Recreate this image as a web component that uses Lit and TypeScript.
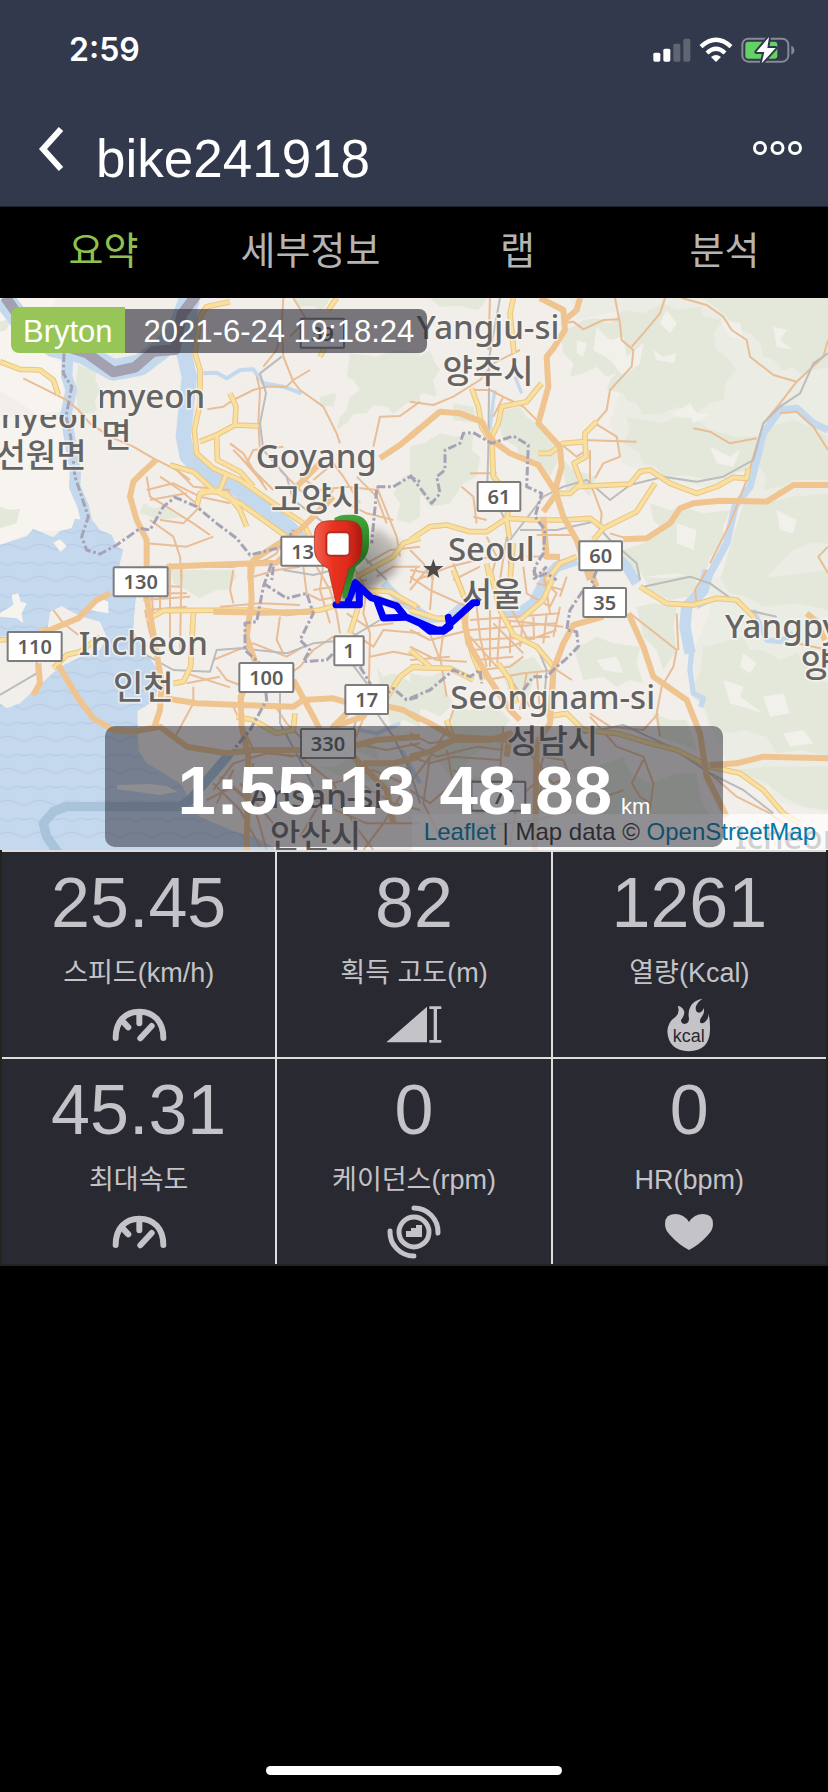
import { LitElement, html, svg, css } from "lit";
import { customElement, property, state } from "lit/decorators.js";

/* The map sheet is 2484 x 1656 units and is drawn as four quadrants. */
const ORIGIN: Record<string, string> = {
  nw: "translate(0 -24)",
  ne: "translate(1230 -24)",
  sw: "translate(0 816)",
  se: "translate(1230 816)",
};

type Lines = Record<string, string[]>;

const HILLS: Lines = {
  ne: ["M480 24H1254V870H940L1000 640L1040 520L900 590L760 570L640 520L600 400L640 280L680 160L640 60L500 90Z"],
  se: ["M900 20L1254 0V730L1120 700L960 590L900 470L860 380L850 250L900 120Z"],
};

const WOODS: Lines = {
  nw: [
    "M0 95L35 85L20 120L0 125Z",
    "M235 225L262 235L268 225L290 240L286 270L300 300L285 330L290 360L280 370H235L225 300Z",
    "M880 24H990L975 50L960 60L940 48L900 50Z",
    "M1050 190L1130 200L1180 180L1260 185V330L1220 340L1180 372L1160 350L1120 345L1100 370L1060 372L1040 400L1010 420L1020 380L1040 360L1050 320L1080 300L1060 270L1040 260Z",
    "M1210 560L1260 540V680L1230 700L1190 690L1200 640L1180 610Z",
    "M0 650L30 660L60 656L50 700L0 715Z",
    "M430 640L460 655L500 650L520 670L545 680L480 690L420 670Z",
    "M960 320L1010 310L1000 350L960 345Z",
  ],
  ne: [
    "M60 24H230L215 50L200 60L150 48L90 50Z",
    "M0 190L30 200L60 180L70 210L90 240L70 270L80 320L40 310L0 330Z",
    "M450 120L490 110L520 90L560 85L600 100L640 60L700 70L760 40L800 60L870 50L880 80L940 90L910 130L920 180L950 200L980 240L950 270L940 330L900 340L860 370L800 350L760 370L700 375L680 340L650 330L640 310L590 300L600 270L620 250L590 260L560 230L520 250L480 260L490 220L460 190Z",
    "M880 24H1254V230L1210 240L1180 260L1150 230L1120 240L1090 210L1060 200L1050 160L1020 130L990 120L940 70Z",
    "M650 380L700 390L760 400L800 380L860 390L900 420L980 440L1060 440L1050 480L1020 540L960 550L900 570L830 555L760 560L740 530L700 520L690 490L640 460L660 420Z",
    "M1080 410L1150 390L1200 410L1254 440V570L1150 570L1110 590L1060 600L1070 560L1040 520Z",
    "M0 470L40 460L90 430L140 440L190 430L185 480L210 500L200 560L160 580L120 640L60 650L40 620L0 600Z",
    "M260 380L280 360L330 350L350 380L380 400L400 430L440 450L450 500L420 560L390 520L330 500L320 470L280 450Z",
    "M450 500L490 540L560 560L540 620L510 590L470 600Z",
    "M720 640L780 660L820 650L880 670L960 660L940 710L940 760L900 800L880 870L800 850L700 860L680 820L640 780L700 760L760 720L730 690Z",
    "M1000 640L1060 640L1150 620L1254 610V760L1200 760L1150 780L1110 820L1060 870H930L960 770Z",
    "M590 760L640 780L700 770L690 850L640 830L600 800Z",
    "M130 340L190 350L200 400L130 390Z",
  ],
  sw: [
    "M510 0H700L710 20L680 60L650 60L600 85L560 60L520 40Z",
    "M1130 290L1150 320L1180 310L1220 330L1260 350V470L1210 450L1180 480L1160 430L1150 400Z",
    "M960 590L1000 590L1060 560L1100 590L1180 580L1150 620L1170 650L1110 630L1060 640Z",
    "M1060 540L1110 500L1140 570Z",
  ],
  se: [
    "M490 230L530 220L560 200L610 220L690 230L680 280L700 340L660 330L620 350L580 320L520 330Z",
    "M0 310L60 320L110 300L100 350L130 400L90 440L50 420L0 410Z",
    "M270 290L370 260L400 300L370 330L350 400L320 370L300 380Z",
    "M130 410L180 420L250 400L300 450L270 490L290 540L230 530L180 560L160 600L120 620L90 580L40 560L80 540L120 500Z",
    "M730 100L800 110L790 170L800 240L780 270L760 300L740 240L700 200L680 110Z",
    "M880 230L930 220L1000 200L1020 240L1060 240L1110 270L1160 250L1200 300L1254 340V560L1180 540L1100 550L1070 500L1000 480L960 490L900 470L890 420L840 370L870 310Z",
    "M480 600L560 590L640 560L660 610L720 640L800 610L860 610L870 680L900 740L830 750L760 790L720 740L640 730L580 760L520 760L540 690Z",
    "M900 580L980 600L1060 590H1254V720L1180 710L1120 680L1070 640L1000 610Z",
    "M700 20L760 25L840 15L890 70L780 90L720 60Z",
    "M930 24L1100 20L1254 0V120L1160 100L1060 110L1010 80L960 70Z",
    "M190 620L230 620L280 600L340 640L310 680L300 730L240 720L200 740Z",
    "M730 430L780 450L830 450L860 540L800 520L750 500Z",
  ],
};

const CLEARINGS: Lines = {
  ne: [
    "M560 110L600 150L640 140L650 200L700 160L690 220L640 260L600 210L550 180Z",
    "M760 350L790 370L840 340L860 370L900 375L850 400L840 380L800 380Z",
    "M930 90L990 100L1000 150L960 140Z",
    "M1090 110L1130 120L1110 150L1150 180L1100 170Z",
    "M900 470L960 500L990 480L970 530L920 520Z",
    "M770 60L800 100L780 130L750 100Z",
    "M1100 660L1160 690L1150 730L1110 720Z",
    "M800 700L860 720L850 780L800 760Z",
    "M730 180L760 200L800 190L790 220L740 210Z",
    "M500 150L530 160L520 200L500 190Z",
  ],
  se: [
    "M940 330L1000 350L990 380L1060 430L960 400Z",
    "M1060 380L1120 370L1140 430L1080 440Z",
    "M560 270L620 260L640 310L580 300Z",
    "M1120 490L1180 480L1210 520L1140 530Z",
    "M990 640L1080 650L1090 690L1030 680Z",
    "M1000 250L1040 280L1020 310L990 290Z",
  ],
};

const RIVERS: [string, number, string][] = [
  ["nw", 34, "M203 190L200 260L214 300L198 372L208 440L226 545L224 590L250 650L265 720"],
  ["nw", 64, "M10 24L60 90L160 170L250 190L340 240L420 225L480 180L530 130L570 24"],
  ["nw", 46, "M560 24L575 110L552 190L568 260L560 340L550 440L562 500L620 555L700 590L790 650L870 715L920 770"],
  ["nw", 12, "M610 250L650 248L680 265L720 240L760 238L790 280L850 290L905 310"],
  ["sw", 26, "M1150 40L1200 90L1280 140"],
  ["se", 20, "M0 132L60 150L110 145L150 110L210 90"],
  ["se", 32, "M280 125L330 128L370 100L400 40L440 -10L500 -30"],
  ["ne", 10, "M315 260L335 310M255 300L250 330L240 420"],
  ["ne", 30, "M600 780L650 830L680 880"],
  ["ne", 22, "M1254 420L1210 400L1160 355L1110 360L1060 430L1040 510L1020 590L975 650L950 760L890 870"],
  ["se", 34, "M895 0L880 60L830 110L825 170L840 250"],
  ["se", 16, "M845 240L840 300L850 370L880 385L872 412M860 110L900 90"],
  ["se", 16, "M1030 120L1070 210L1110 215L1150 190"],
  ["sw", 12, "M1080 480L1130 490L1200 460M1205 540L1260 640"],
];

const MINOR: Lines = {
  nw: [
    "M70 265L120 290L160 310L200 330L235 360L270 400L330 440L400 470L460 505L530 540L570 570",
    "M622 358L670 350L700 330L760 300L800 290L860 290L880 270L930 240",
    "M850 24L845 110L850 200L880 275L900 300L970 350L1010 430L1020 460",
    "M790 230L830 180L845 110M770 260L780 300L775 400L780 480",
    "M880 24L920 90L870 140M690 460L730 490L760 540L800 600",
    "M700 480L820 600M720 500L790 580M740 520L760 480L850 470",
    "M440 560L450 620L500 650L580 700L630 735M440 600L520 580L600 620L690 640",
    "M480 560L540 600L600 650M520 530L580 590L690 600M450 630L560 610",
    "M440 760L560 770L640 740M450 690L520 740L540 800L545 870",
    "M480 690L550 700L600 650M1120 470L1140 380L1200 378L1260 335",
    "M1130 590L1150 640L1190 740L1200 800M1070 560L1130 620L1160 700",
    "M900 560L960 600L1040 590L1130 600M940 570L1000 520L1030 560L1080 640",
    "M840 540L900 600L960 650L1000 600M1040 640L1100 670L1180 690",
    "M780 820L830 790L850 740M760 860L830 840L900 830",
    "M1100 820L1170 780L1260 770M1130 860L1180 830L1260 830",
  ],
  ne: [
    "M0 335L70 345L130 320L210 270L250 220L330 180M240 24L235 180",
    "M615 24L630 100L635 150L670 180L665 230L600 300L590 360L555 400",
    "M455 100L490 95L520 118L580 90L630 88M765 24L750 70L700 130L665 170",
    "M815 24L890 45L940 80L965 120L1010 150L1020 200L1090 255L1160 275L1110 340L1060 400L1030 500L1010 570L960 700L900 820",
    "M1254 150L1240 200L1160 275M1110 370L1160 365L1210 410L1254 480",
    "M520 450L680 455M555 400L620 440L630 500L580 520L555 565M540 480L540 590",
    "M850 415L900 425L960 460L1040 445",
    "M450 460L500 500L530 480M545 590L575 670L570 720M600 730L650 745",
    "M155 590L190 620L200 700M180 550L260 550M190 680L230 690",
    "M0 780L40 820L70 870M20 870L120 830L240 800M0 840L60 850",
    "M130 870L210 830M230 740L260 800L240 870M290 740L270 870",
    "M405 720L410 800L450 810M380 735L500 735M350 800L450 798",
    "M180 300L240 300L300 330L340 350L390 400M250 380L280 320",
    "M1254 770L1225 800L1254 850",
  ],
  sw: [
    "M160 120L190 160L235 195M450 20L460 130M510 -20L510 240M545 -20L540 240",
    "M430 90L570 80M430 45L540 50M440 120L560 110M480 0L480 130M440 70L560 70",
    "M435 120L450 190L480 290M560 310L690 352M580 350L580 400L520 510M560 340L660 320",
    "M650 290L680 330L720 345M640 270L760 220L860 260L910 230",
    "M660 110L780 100L900 105M700 100L690 60L700 0M840 140L830 210L850 250",
    "M950 -10L990 60L1010 130L1020 190M940 60L1000 50L1100 30M970 -20L960 60L990 160",
    "M910 -10L920 70L960 90L1010 80M1060 -10L1100 60L1160 90L1260 110",
    "M1100 60L1090 130L1110 190L1105 420M1110 260L1180 245L1260 260M1040 130L1100 170L1180 160",
    "M1060 190L1120 230L1150 180L1260 190M840 330L900 290L940 240L1000 200",
    "M740 330L720 430L740 560M700 410L760 540L880 560M820 400L860 460L920 520L960 560",
    "M640 660L700 580L800 550L920 560M620 690L700 650L760 700L800 840M640 640L720 720L780 830",
    "M660 620L740 690M700 600L650 700M720 640L820 760M760 580L740 740M900 560L1000 640L1060 760L1120 840",
    "M1100 420L1060 520L1080 640L1180 700L1260 720M1060 520L1160 540L1260 520",
    "M860 620L960 700L1100 760L1260 760M1090 840L1150 760L1200 680L1230 560",
    "M960 700L900 800M1000 640L1120 600L1210 640",
  ],
  se: [
    "M0 20L60 60L170 110M0 60L50 0M70 0L60 120M130 -20L160 60L170 110M20 -10L0 40",
    "M200 110L210 200L230 290M240 120L240 290M270 140L262 280M300 150L300 250M340 140L330 230M370 140L372 210M410 130L400 220M450 110L430 200",
    "M180 150L450 130M180 180L440 160M180 210L420 200M190 240L300 230L440 180M200 270L310 260M210 300L300 290L340 260",
    "M280 150L460 170M250 160L340 250M180 200L260 290M300 110L360 220",
    "M0 230L80 270L170 275M0 180L60 210L180 180M0 270L120 260M100 190L90 260L110 380M60 190L90 270",
    "M340 -10L350 70L420 110L440 70L400 30M450 80L470 20M380 40L460 60M400 0L420 130",
    "M230 330L340 310L440 300L485 330M350 310L330 420M380 310L390 420M310 340L360 410",
    "M660 130L800 240L790 290L755 350L740 430L750 500M890 0L855 60L860 100M800 130L805 240",
    "M540 430L600 470L700 480L745 430M540 440L620 530L700 560L730 640L720 720",
    "M700 570L665 640L690 680L720 700M560 690L640 660M0 490L60 520L130 510M0 520L80 560L200 530L280 540",
    "M0 560L60 580L130 560L270 570M0 640L60 560L110 480L130 420M0 660L60 700L130 640L110 540",
    "M60 560L40 700L90 800M130 600L220 650L330 680L430 590M280 470L270 600L320 700L300 830",
    "M400 560L460 570L480 620L430 640L390 600L400 560M350 540L400 600L380 740M200 770L380 750L480 720",
    "M1160 220L1210 230L1254 240M900 610L980 680L1080 730L1120 760",
  ],
};

const RAIL: Lines = {
  nw: ["M845 200L780 250L798 310L780 400L790 480L860 560L880 630L960 690L1080 790L1160 870", "M440 830L700 830L800 810"],
  ne: [
    "M270 24L238 200L235 480L232 580L290 700L300 870",
    "M300 750L400 620L460 590L530 570L600 630L660 585L760 560L860 575L940 560L1030 510L1060 400L1110 350L1170 310L1210 220L1254 190",
    "M330 720L440 720L550 695L600 750L680 820L690 870",
  ],
  sw: [
    "M0 375L110 310L110 250M430 250L520 300L630 305L650 240L720 235L860 250L940 220L1040 210L1140 150",
    "M840 350L840 460L900 570L940 650M1040 260L1100 340L1060 480M1110 400L1180 500L1230 600L1260 700",
    "M850 0L940 15L1000 0L1070 -20",
  ],
  se: [
    "M700 50L840 20L900 40L1010 120L1100 140",
    "M520 490L640 465L780 530L900 610L1000 660L1090 730",
    "M380 230L410 300L400 420",
  ],
};

const YELLOW: Lines = {
  nw: [
    "M690 35L620 50L600 80L585 190L600 240L600 340L583 420L590 490L640 535L720 570L820 640L910 700L930 740",
    "M600 455L650 435L705 405L775 408M690 310L708 350L705 405M650 435L652 510L720 545L760 590",
    "M510 525L580 545L640 600L720 640L860 740M600 600L680 610L720 660L740 710",
    "M0 215L60 238L120 240L160 270L175 315M1010 24L985 60M960 200L980 160",
    "M680 550L660 600L600 610L590 650M1070 860L1180 800L1210 760L1260 745",
  ],
  ne: [
    "M310 24L300 70L312 190M395 280L350 335L275 350L265 400L245 440L250 560L300 620L290 690L298 740",
    "M185 295L205 350L215 410L240 450M385 490L420 490L460 460L525 455L525 430L560 395M525 455L528 500L492 520L515 580L480 610L440 610",
    "M500 590L660 582L690 545L720 540L780 580L860 610L920 590L970 562L1010 565L1015 535",
    "M0 750L60 710L110 705L180 725L230 725L290 685L380 690L460 690L540 685L580 715L550 750M580 715L680 665L735 580",
    "M410 870L450 820L500 800M230 820L240 870M310 760L300 870",
  ],
  sw: [
    "M440 150L490 122L780 120L860 130L960 120L1030 100M580 130L572 290L550 335L520 340",
    "M160 295L200 255L240 245L300 200M0 210L25 208M120 182L150 180",
    "M1075 110L1050 190M1150 400L1200 320L1240 290L1260 290",
    "M710 440L760 450L830 490L880 480L885 430M1100 60L1170 65L1250 110",
  ],
  se: [
    "M0 120L80 145L120 145M130 0L170 100L165 170L190 260L220 330",
    "M0 292L120 295L190 330M240 0L270 120L310 195L380 230L430 290L425 420",
    "M690 50L770 100L850 105L920 85L980 90L1030 140L1040 180",
    "M410 440L470 430L520 480L620 490L720 520L800 540L900 590L990 610L1060 660L1120 730L1170 760",
    "M265 280L300 330L320 400M330 150L400 90L430 20",
    "M0 240L60 290M110 450L130 510",
  ],
};

const ORANGE: Lines = {
  nw: [
    "M470 508L430 545L400 575L390 620L410 690L440 750L440 870",
    "M500 830L620 825L830 818L860 790M1000 620L900 720L760 810L750 870M1140 505L1200 465L1260 415",
    "M880 600L960 520",
  ],
  ne: [
    "M0 440L90 365L150 370L215 395L245 450L300 490L385 525L440 610L400 665",
    "M390 24L460 60L465 120L430 175L410 200L415 290L385 400L450 470L455 530L435 600L460 680L500 750L540 870",
    "M510 24L500 60L465 90M640 748L710 745L780 700L810 655L850 640L930 632L1070 635L1150 585L1254 585",
    "M400 680L410 800L450 800",
  ],
  sw: [
    "M440 -10L435 60L455 160L470 250L485 340L480 420L460 480",
    "M330 70L290 90L235 145L150 180L120 190M750 -20L755 90L740 200L770 290L722 380L725 470L745 560L740 840",
    "M640 125L780 128L940 125M495 385L590 400L720 405L880 410L910 390L1000 385L1050 400M1165 410L1210 420L1260 450",
    "M175 285L235 385L280 445L340 480L400 485L480 470L560 530L680 550L760 540L900 540",
    "M115 280L120 340L100 375M880 330L940 440L960 480M1040 430L1000 470L1090 440L1110 400",
    "M1010 540L1130 510L1260 500M1090 580L1180 580L1260 560M1060 560L1160 660L1180 760",
  ],
  se: [
    "M160 130L175 220L240 330L300 420L330 450M0 430L60 460L130 500L300 510",
    "M540 0L560 50M580 140L490 165L460 220L430 300L425 380L420 460L380 520L375 840",
    "M655 130L700 230L730 320L830 390L870 490L890 620L950 740",
    "M900 585L980 580L1060 560L1254 565M1190 130L1220 155M0 560L60 545L130 510L240 510L300 490L290 560",
    "M1225 170L1245 210",
  ],
};

const BORDERS: Lines = {
  nw: [
    "M192 190L190 250L215 290L198 380L212 440L225 560L265 680L245 740L260 780L300 792L350 765L420 715L450 720L490 650L525 622L590 650L650 700L710 745L750 795L850 770L880 720M820 830L815 870",
    "M1130 590L1180 590L1230 560L1260 575M1130 600L1115 760",
  ],
  ne: [
    "M0 555L35 600L65 640L90 610L80 560L105 540L105 480L150 460L160 430L190 428L245 460L310 438L355 465L350 590L395 610L375 680L405 720L400 790L375 830L372 865L410 850L440 870",
  ],
  sw: [
    "M815 -20L790 50L770 155L735 160L735 240L790 290L800 390L750 480L700 540",
    "M790 40L860 85L920 70L940 130L900 210L930 240L910 275L980 270L1010 240M1080 290L1110 340L1130 400L1180 355L1220 390L1260 380",
  ],
  se: [
    "M0 385L60 360L130 300L180 320L210 300L215 340M340 360L370 320L410 320L440 290L465 270L505 230L500 185L470 180L480 120L520 60",
    "M560 0L545 40L560 60M370 0L380 20L410 -10",
  ],
};

/* quadrant, x, y, width, number */
const SHIELDS: [string, number, number, number, string][] = [
  ["nw", 902, 86, 130, "39"],
  ["nw", 844, 740, 162, "130"],
  ["ne", 203, 576, 128, "61"],
  ["ne", 508, 754, 128, "60"],
  ["se", 520, 54, 128, "35"],
  ["sw", 341, -8, 162, "130"],
  ["sw", 23, 186, 162, "110"],
  ["sw", 1003, 199, 88, "1"],
  ["sw", 718, 279, 162, "100"],
  ["sw", 1036, 345, 128, "17"],
  ["sw", 903, 477, 162, "330"],
  ["se", 184, 635, 162, "171"],
];

/* quadrant, centre x, baseline, name */
const PLACES: [string, number, number, string][] = [
  ["ne", 234, 148, "Yangju-si"],
  ["ne", 234, 278, "양주시"],
  ["nw", 949, 535, "Goyang"],
  ["nw", 949, 662, "고양시"],
  ["nw", 123, 532, "선원면"],
  ["ne", 244, 812, "Seoul"],
  ["se", 246, 108, "서울"],
  ["sw", 430, 255, "Incheon"],
  ["sw", 430, 388, "인천"],
  ["se", 428, 417, "Seongnam-si"],
  ["se", 428, 550, "성남시"],
  ["sw", 947, 715, "Ansan-si"],
  ["sw", 947, 835, "안산시"],
];

const layer = (name: string, lines: Lines) =>
  Object.entries(lines).map(
    ([q, ds]) => svg`<g transform=${ORIGIN[q]} class=${name}>${ds.map((d) => svg`<path d=${d} />`)}</g>`
  );

@customElement("ride-map")
class RideMap extends LitElement {
  static styles = css`
    :host { display: block; }
    svg { display: block; width: 100%; height: 100%; }
    path { stroke-linejoin: round; }
    .land { fill: #f2eeea; }
    .pale { fill: #f7f4ef; }
    .hill path { fill: #ebece3; }
    .wood path { fill: #e4e8da; }
    .clear path { fill: #f2f0ea; }
    .sea { fill: #c4d8ee; }
    .wave { fill: none; stroke: #bccfe6; stroke-width: 5; }
    .river, .minor, .rail, .casing, .yellow, .orange, .border { fill: none; }
    .river { stroke: #c4d8ee; }
    .estuary { fill: none; stroke: #a3a1af; stroke-width: 32; }
    .bridge { fill: none; stroke: #a8c3da; stroke-width: 28; }
    .minor { stroke: #e9bd96; stroke-width: 6; }
    .rail { stroke: #bcbcbc; stroke-width: 6; }
    .casing { stroke: #ecc47f; stroke-width: 17; }
    .yellow { stroke: #f8e0a0; stroke-width: 11; }
    .orange { stroke: #f0c48f; stroke-width: 18; }
    .border { stroke: #a5a3b5; stroke-width: 9; stroke-dasharray: 26 8 8 8; }
    .shield { fill: #ffffff; stroke: #7d7d7d; stroke-width: 6; }
    .number { font: 600 60px "Noto Sans", sans-serif; fill: #5c5c5c; text-anchor: middle; }
    .place {
      font: 500 99px "Noto Sans", "Noto Sans CJK KR", sans-serif;
      fill: #646464;
      stroke: rgba(247, 244, 240, 0.75);
      stroke-width: 10;
      stroke-linejoin: round;
      paint-order: stroke;
      text-anchor: middle;
    }
    .start { text-anchor: start; }
    .end { text-anchor: end; }
    .star { fill: #4a4a4a; }
    .track { fill: none; stroke: #0000f5; stroke-width: 21; stroke-linecap: round; }
  `;

  render() {
    return html`
      <svg viewBox="0 0 2484 1656" preserveAspectRatio="xMidYMid slice" role="img" aria-label="라이딩 경로">
        <defs>
          <pattern id="waves" width="96" height="96" patternUnits="userSpaceOnUse">
            <path class="wave" d="M0 24Q24 44 48 24Q72 34 96 24M0 72Q24 62 48 72Q72 92 96 72" />
          </pattern>
          <linearGradient id="red" x1="0" x2="1"><stop offset="0" stop-color="#f2604e" /><stop offset=".4" stop-color="#e8321f" /><stop offset=".7" stop-color="#dc2a1c" /><stop offset="1" stop-color="#a8190f" /></linearGradient>
          <linearGradient id="green" x1="0" x2="0" y1="0" y2="1"><stop offset="0" stop-color="#45a83a" /><stop offset=".5" stop-color="#1f6f1c" /><stop offset="1" stop-color="#3c9433" /></linearGradient>
          <linearGradient id="shade" x1="0" y1="1" x2="1" y2="0"><stop offset="0" stop-opacity=".65" /><stop offset="1" stop-opacity=".1" /></linearGradient>
          <filter id="soft" x="-50%" y="-50%" width="200%" height="200%"><feGaussianBlur stdDeviation="12" /></filter>
          <clipPath id="tileEast"><rect x="300" y="200" width="400" height="400" /></clipPath>
          <clipPath id="tileSouth"><rect x="0" y="375" width="300" height="300" /></clipPath>
        </defs>
        <rect class="land" width="2484" height="1656" />
        <path class="pale" d="M0 0H170L120 120L190 200V340L110 350L40 300L0 280ZM0 356H200L215 560L250 700L100 700L0 740Z" />
        ${layer("hill", HILLS)} ${layer("wood", WOODS)} ${layer("clear", CLEARINGS)}
        ${RIVERS.map(([q, w, d]) => svg`<g transform=${ORIGIN[q]}><path class="river" stroke-width=${w} d=${d} /></g>`)}
        ${["#c4d8ee", "url(#waves)"].map(
          (fill) => svg`<path fill=${fill}
            d="M0 740L80 715L100 692L160 718L180 700L215 690L225 662L280 670L300 696L335 710L350 745L370 756L358 800L380 850L410 870L402 960L400 1000L440 1066L480 1126L465 1206L412 1240L415 1356L440 1396L540 1456L600 1556L700 1600L760 1616L840 1656H0Z" />`
        )}
        <g transform="translate(0 816)">
          <path class="land" d="M140 195L150 125L185 108L215 125L245 140L300 155L320 200L300 240L240 262L180 290L130 335L60 400L20 415L0 400V200L100 190Z" />
          <path class="pale" d="M0 130L40 105L35 75L55 70L62 95L80 100L65 130L70 160L50 145L0 140Z" />
          <path class="pale" d="M160 -82L180 -92L200 -72L182 -54Z" />
          <path class="pale" d="M270 120L300 85L325 95V130Z" />
          <path class="pale" d="M350 645L450 642L500 648L532 665L480 675L430 668L352 658Z" />
          <path class="bridge" d="M175 850L140 800L130 760L160 725L200 710H540L570 690L690 550" />
        </g>
        <path class="estuary" d="M15 -4L60 60L150 130L260 165L340 222L405 208L460 160L525 155L545 50L590 -10" />
        ${layer("minor", MINOR)} ${layer("rail", RAIL)} ${layer("casing", YELLOW)} ${layer("yellow", YELLOW)}
        ${layer("orange", ORANGE)} ${layer("border", BORDERS)}
        ${SHIELDS.map(
          ([q, x, y, w, n]) => svg`<g transform=${ORIGIN[q]}>
            <rect class="shield" x=${x} y=${y} width=${w} height="87" rx="3" />
            <text class="number" x=${x + w / 2} y=${y + 66}>${n}</text></g>`
        )}
        ${PLACES.map(
          ([q, x, y, t]) => svg`<g transform=${ORIGIN[q]}><text class="place" x=${x} y=${y}>${t}</text></g>`
        )}
        <g transform="translate(0 -24)">
          <g clip-path="url(#tileEast)">
            <text class="place start" x="290" y="353">myeon</text>
            <text class="place end" x="395" y="472">면</text>
          </g>
          <g clip-path="url(#tileSouth)"><text class="place start" x="2" y="413">nyeon</text></g>
        </g>
        <g transform="translate(1230 816)">
          <text class="place start" x="945" y="205">Yangpy</text>
          <text class="place start" x="1172" y="322">양</text>
          <text class="place start" x="975" y="836">Icheon</text>
        </g>
        <path class="star" d="M1300 783L1307 804L1330 804L1312 818L1318 840L1300 827L1282 840L1288 818L1270 804L1293 804Z" />
        <path filter="url(#soft)" fill="url(#shade)" d="M1015 915L1090 730L1130 690L1200 740L1190 820L1110 880Z" />
        <g transform="translate(0 816)">
          <path class="track" d="M1008 104H1078V55L1066 38L1045 92M1066 38L1112 82L1190 108L1216 140L1290 172L1310 180H1330L1420 98H1430M1190 108L1216 142L1150 144L1130 90M1216 140L1260 160L1290 184H1330L1350 170L1345 142" />
        </g>
        <path fill="url(#green)" d="M1003 660Q1020 650 1040 650H1062Q1107 656 1107 700V738Q1107 770 1084 792L1068 806L1042 896Q1036 906 1028 900L1020 800Z" />
        <path fill="url(#red)" stroke="#9a2a1c" stroke-width="2" d="M988 668H1042Q1086 668 1086 712V746Q1086 780 1062 800L1046 812L1018 916H1008L985 812L966 800Q943 780 943 750V712Q943 668 988 668Z" />
        <rect x="979" y="703" width="70" height="70" rx="12" fill="#ffffff" stroke="#b82a20" stroke-width="6" />
      </svg>
    `;
  }
}

const ICONS = {
  speed: svg`<svg viewBox="333 471 168 168" aria-hidden="true">
    <g fill="none" stroke="currentColor" stroke-width="18" stroke-linecap="round">
      <path d="M347 594C347 546 374 515 418 515S490 546 490 594" />
      <path d="M418 520V550M371 547L385 562M455 558L421 595" />
    </g></svg>`,
  climb: svg`<svg viewBox="1161 471 168 168" aria-hidden="true">
    <path fill="currentColor" d="M1162 607L1284 500V607ZM1291 499H1327V507H1314V600H1327V608H1291V600H1304V507H1291Z" /></svg>`,
  energy: svg`<svg viewBox="762 471 168 168" aria-hidden="true">
    <path fill="currentColor" d="M812 497Q832 502 832 520Q830 530 822 540Q822 551 832 552Q846 550 846 536Q842 514 850 500Q860 480 887 476Q868 488 866 504Q866 518 876 518Q887 517 890 504Q894 516 886 528Q876 540 880 548Q888 553 896 544Q906 534 904 520Q910 540 909 570Q908 632 845 634Q784 632 781 574Q782 546 806 530Q820 518 812 497Z" />
    <text x="845" y="607" text-anchor="middle" font-family="Liberation Sans, sans-serif" font-size="54" fill="#292931">kcal</text></svg>`,
  cadence: svg`<svg viewBox="0 0 56 56" aria-hidden="true">
    <g fill="none" stroke="currentColor" stroke-width="5" stroke-linecap="round">
      <circle cx="28" cy="28" r="15" />
      <path d="M28 4A24 24 0 0 1 52 29M4 27A24 24 0 0 0 28 52" />
    </g>
    <path fill="currentColor" d="M20 33V27H25V24H30V21H36V33Z" /></svg>`,
  heart: svg`<svg viewBox="0 0 56 56" aria-hidden="true">
    <path fill="currentColor" d="M28 46Q18 41 9 31Q4 26 4 20Q4 10 14 10Q23 10 28 18Q33 10 42 10Q52 10 52 20Q52 26 47 31Q38 41 28 46Z" /></svg>`,
};

interface Stat { value: string; label: string; icon: keyof typeof ICONS; }

const STATS: Stat[] = [
  { value: "25.45", label: "스피드(km/h)", icon: "speed" },
  { value: "82", label: "획득 고도(m)", icon: "climb" },
  { value: "1261", label: "열량(Kcal)", icon: "energy" },
  { value: "45.31", label: "최대속도", icon: "speed" },
  { value: "0", label: "케이던스(rpm)", icon: "cadence" },
  { value: "0", label: "HR(bpm)", icon: "heart" },
];

@customElement("stat-cell")
class StatCell extends LitElement {
  @property({ attribute: false }) stat!: Stat;

  static styles = css`
    :host {
      display: flex;
      flex-direction: column;
      align-items: center;
      padding: 16px 0 4px;
      background: #292931;
      color: #c4c3c8;
    }
    .value { font-size: 70px; line-height: 70px; }
    .label { margin-top: 17px; font-size: 27px; line-height: 36px; }
    svg { display: block; width: 56px; height: 56px; margin-top: 6px; }
  `;

  render() {
    return html`
      <div class="value">${this.stat.value}</div>
      <div class="label">${this.stat.label}</div>
      ${ICONS[this.stat.icon]}
    `;
  }
}

const TABS = ["요약", "세부정보", "랩", "분석"];

@customElement("app-root")
class AppRoot extends LitElement {
  @state() private tab = 0;

  static styles = css`
    :host {
      display: flex;
      flex-direction: column;
      min-height: 100vh;
      background: #000000;
      color: #ffffff;
      font-family: "Liberation Sans", "Noto Sans CJK KR", sans-serif;
    }
    button {
      padding: 0;
      border: 0;
      background: none;
      color: inherit;
      font: inherit;
      cursor: pointer;
    }
    header { background: #32394c; border-bottom: 1px solid #1d222e; }
    .status {
      display: flex;
      align-items: center;
      justify-content: space-between;
      height: 100px;
      padding: 0 32px 0 69px;
      font: 600 32px/40px "Inter", sans-serif;
    }
    .status svg { display: block; width: 143px; height: 28px; }
    .bar { display: flex; align-items: center; height: 106px; padding: 0 24px 0 36px; }
    .back svg, .more svg { display: block; }
    .back { padding-bottom: 8px; }
    h1 { flex: 1; margin: 0 0 0 28px; padding-top: 12px; font-size: 53px; line-height: 60px; font-weight: 400; }
    .more { padding-bottom: 10px; }
    nav { display: grid; grid-template-columns: repeat(4, 1fr); height: 91px; }
    .tab { padding-bottom: 4px; font-size: 38px; line-height: 44px; color: #b4b4b4; }
    .tab.on { color: #92c050; }
    .map { position: relative; aspect-ratio: 3 / 2; overflow: hidden; }
    ride-map { height: 100%; }
    .source {
      position: absolute;
      top: 9px;
      left: 11px;
      display: flex;
      align-items: flex-end;
      font-size: 31px;
      line-height: 42px;
    }
    .brand { padding: 4px 12px 0; border-radius: 8px 0 0 8px; background: #98c558; }
    .date { padding: 2px 13px 0 19px; border-radius: 0 8px 8px 0; background: rgba(38, 38, 48, 0.6); }
    .credit {
      position: absolute;
      right: 0;
      bottom: 0;
      padding: 0 12px;
      background: rgba(255, 255, 255, 0.7);
      color: #333333;
      font-size: 24px;
      line-height: 36px;
      white-space: nowrap;
    }
    .credit a { color: #0078a8; text-decoration: none; }
    .totals {
      position: absolute;
      right: 105px;
      bottom: 3px;
      left: 105px;
      display: flex;
      align-items: baseline;
      justify-content: center;
      box-sizing: border-box;
      height: 121px;
      padding-top: 27px;
      border-radius: 10px;
      background: rgba(38, 38, 48, 0.5);
      font-size: 69px;
      line-height: 76px;
      font-weight: 700;
      pointer-events: none;
    }
    .distance { margin-left: 24px; }
    .unit { margin-left: 9px; font-size: 22px; font-weight: 400; }
    .stats {
      display: grid;
      grid-template-columns: repeat(3, 1fr);
      gap: 2px;
      padding-top: 2px;
      border: solid #22241f;
      border-width: 0 2px 2px;
      background: #dededa;
    }
    .home { width: 296px; height: 9px; margin: auto auto 17px; border-radius: 5px; background: #ffffff; }
  `;

  render() {
    return html`
      <header>
        <div class="status">
          <span>2:59</span>
          <svg viewBox="98 46 429 84" aria-hidden="true">
            <g fill="#ffffff">
              <rect x="99" y="96" width="21" height="27" rx="5" />
              <rect x="129" y="84" width="21" height="39" rx="5" />
              <g opacity=".22"><rect x="159" y="69" width="21" height="54" rx="5" /><rect x="189" y="54" width="21" height="69" rx="5" /></g>
              <path d="M287 124L272 109Q287 97 302 109Z" />
            </g>
            <g fill="none" stroke="#ffffff" stroke-width="13"><path d="M242 78Q287 37 332 78" /><path d="M260 97Q287 72 314 97" /></g>
            <rect x="366" y="54" width="138" height="69" rx="18" fill="none" stroke="#868b97" stroke-width="6" />
            <path d="M513 75Q522 79 522 89T513 102Z" fill="#868b97" />
            <rect x="375" y="63" width="96" height="51" rx="9" fill="#65d265" />
            <path d="M446 49L408 94H432L424 128L466 82H441Z" fill="#ffffff" stroke="#32394c" stroke-width="12" stroke-linejoin="round" paint-order="stroke" />
          </svg>
        </div>
        <div class="bar">
          <button class="back" aria-label="뒤로">
            <svg width="32" height="46" viewBox="0 0 32 46" aria-hidden="true"><path d="M25 3L7 23L25 43" fill="none" stroke="#ffffff" stroke-width="6" /></svg>
          </button>
          <h1>bike241918</h1>
          <button class="more" aria-label="더보기">
            <svg width="52" height="16" viewBox="0 0 52 16" aria-hidden="true">
              <g fill="none" stroke="#ffffff" stroke-width="3"><circle cx="8" cy="8" r="5.5" /><circle cx="25.5" cy="8" r="5.5" /><circle cx="43" cy="8" r="5.5" /></g>
            </svg>
          </button>
        </div>
      </header>
      <nav>
        ${TABS.map(
          (name, i) => html`<button
            class=${i === this.tab ? "tab on" : "tab"}
            aria-current=${i === this.tab ? "page" : "false"}
            @click=${() => (this.tab = i)}
          >${name}</button>`
        )}
      </nav>
      <section class="map">
        <ride-map></ride-map>
        <div class="source"><span class="brand">Bryton</span><span class="date">2021-6-24 19:18:24</span></div>
        <div class="credit"><a href="#leaflet">Leaflet</a> | Map data © <a href="#osm">OpenStreetMap</a></div>
        <div class="totals"><span>1:55:13</span><span class="distance">48.88</span><span class="unit">km</span></div>
      </section>
      <section class="stats">${STATS.map((s) => html`<stat-cell .stat=${s}></stat-cell>`)}</section>
      <div class="home"></div>
    `;
  }
}
